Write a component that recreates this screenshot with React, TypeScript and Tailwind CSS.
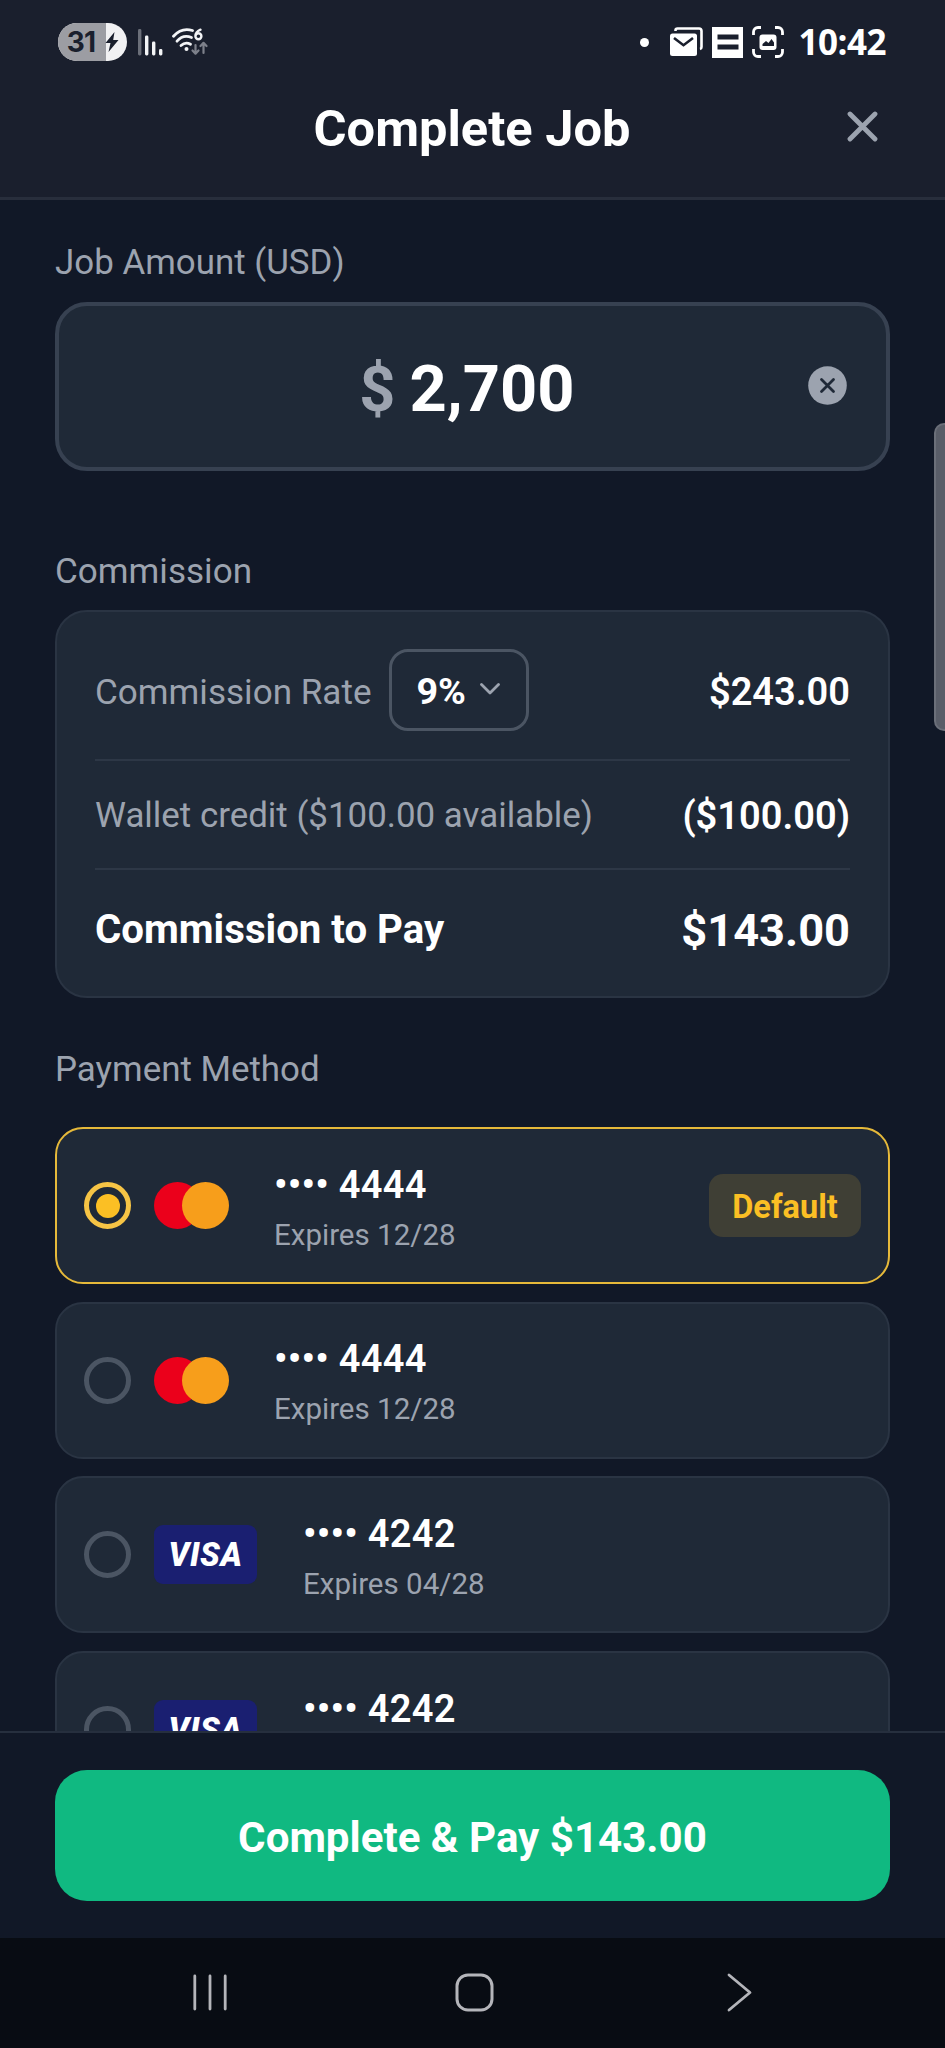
import React from 'react';

type Brand = 'mastercard' | 'visa';

interface SavedCard {
  id: string;
  brand: Brand;
  last4: string;
  expires: string;
  isDefault?: boolean;
}

const cards: SavedCard[] = [
  { id: 'card-1', brand: 'mastercard', last4: '4444', expires: '12/28', isDefault: true },
  { id: 'card-2', brand: 'mastercard', last4: '4444', expires: '12/28' },
  { id: 'card-3', brand: 'visa', last4: '4242', expires: '04/28' },
  { id: 'card-4', brand: 'visa', last4: '4242', expires: '04/28' },
];

const StatusBar: React.FC = () => (
  <div className="flex h-[84px] items-center justify-between pl-[58px] pr-[59px] font-['Open_Sans',sans-serif]">
    <div className="flex items-center">
      <div className="flex h-[38px] w-[69px] items-center overflow-hidden rounded-full bg-[#f1f1f3]">
        <div className="flex h-full w-[48px] items-center justify-end bg-[#9c9da3] pr-[11px] font-['Inter',sans-serif] text-[28px] font-bold tracking-[-1px] text-[#1a1f2d]">
          31
        </div>
        <svg className="-ml-px h-[20px] w-[14px]" viewBox="0 0 14 20" fill="#1a1f2d">
          <path d="M9.5 0 0.5 11h5L3.5 20 13.5 8H8.2z" />
        </svg>
      </div>
      <svg className="ml-[11px] h-[27px] w-[25px]" viewBox="0 0 25 27">
        <rect x="0" y="0" width="3.4" height="26.5" rx="1.4" fill="#6b6f79" />
        <rect x="7" y="6.5" width="3.4" height="20" rx="1.4" fill="#f3f4f6" />
        <rect x="14" y="12.5" width="3.4" height="14" rx="1.4" fill="#f3f4f6" />
        <rect x="21" y="20" width="3.4" height="6.5" rx="1.4" fill="#f3f4f6" />
      </svg>
      <svg className="ml-[9px] h-[28px] w-[36px]" viewBox="0 0 36 28" fill="none" strokeLinecap="round">
        <g stroke="#f3f4f6" strokeWidth="2.8">
          <path d="M1.5 8.2C7 2 14 0.5 20.5 2.5" />
          <path d="M5 13.2C9 8.5 14.5 7.5 19.5 9.5" />
          <path d="M9 17.6C12 14.8 15.5 14.6 18.5 16.3" />
        </g>
        <circle cx="14.5" cy="21" r="2" fill="#f3f4f6" />
        <path d="M28.5 1.7C24.5 3.5 23.4 6 23.4 8.3a3 3 0 1 0 3-3c-1.5 0-2.8 1.2-3 2.7" stroke="#f3f4f6" strokeWidth="2.4" />
        <g stroke="#7d808a" strokeWidth="2.2" strokeLinejoin="round">
          <path d="M23.5 17v8M20.5 22.5l3 3.2 3-3.2" />
          <path d="M31.5 25v-9M28.5 18l3-3.2 3 3.2" />
        </g>
      </svg>
    </div>
    <div className="flex items-center">
      <div className="size-[9px] rounded-full bg-white" />
      <svg className="ml-[21px] h-[30px] w-[33px]" viewBox="0 0 33 30">
        <path d="M5.5 4V3.5a2 2 0 0 1 2-2H29a2.5 2.5 0 0 1 2.5 2.5V20a2 2 0 0 1-1.5 2" fill="none" stroke="#fff" strokeWidth="2.6" />
        <rect x="0" y="6.5" width="27" height="22.5" rx="2.5" fill="#fff" />
        <path d="M4 11l9.5 7.2L23 11" fill="none" stroke="#1a1f2d" strokeWidth="2.6" />
      </svg>
      <svg className="ml-[9px] size-[31px]" viewBox="0 0 31 31">
        <rect width="31" height="31" fill="#fff" />
        <rect x="5.5" y="7.5" width="21" height="5" fill="#1a1f2d" />
        <rect x="5.5" y="17.5" width="21" height="5" fill="#1a1f2d" />
      </svg>
      <svg className="ml-[9px] size-[32px]" viewBox="0 0 32 32">
        <path
          d="M1.5 9V6a4.5 4.5 0 0 1 4.5-4.5h3M23 1.5h3A4.5 4.5 0 0 1 30.5 6v3M30.5 23v3a4.5 4.5 0 0 1-4.5 4.5h-3M9 30.5H6A4.5 4.5 0 0 1 1.5 26v-3"
          fill="none"
          stroke="#fff"
          strokeWidth="2.8"
        />
        <rect x="7.5" y="8.5" width="17" height="15.5" rx="3" fill="#fff" />
        <path d="M10.5 20v-2l3.5-3 2.5 2 3-4 2.5 3.5V20z" fill="#1a1f2d" />
      </svg>
      <span className="-mt-px ml-[14px] text-[35px] font-bold leading-none tracking-[-0.5px] text-white">10:42</span>
    </div>
  </div>
);

const Radio: React.FC<{ checked?: boolean }> = ({ checked }) => (
  <div
    className={
      checked
        ? 'flex size-[47px] shrink-0 items-center justify-center rounded-full border-[5px] border-[#f6c445]'
        : 'size-[47px] shrink-0 rounded-full border-[5px] border-[#4b5563]'
    }
  >
    {checked && <div className="size-[24px] rounded-full bg-[#fbbf24]" />}
  </div>
);

const BrandLogo: React.FC<{ brand: Brand }> = ({ brand }) =>
  brand === 'mastercard' ? (
    <svg className="h-[47px] w-[75px] shrink-0" viewBox="0 0 75 47">
      <circle cx="23.5" cy="23.5" r="23.5" fill="#eb001b" />
      <circle cx="51.5" cy="23.5" r="23.5" fill="#f79e1b" />
    </svg>
  ) : (
    <div className="mr-px flex h-[59px] w-[103px] shrink-0 items-center justify-center rounded-[9px] bg-[#1a1f71] pt-px text-[32.5px] font-black italic leading-none tracking-[0.6px] text-white">
      VISA
    </div>
  );

const PaymentCard: React.FC<{ card: SavedCard }> = ({ card }) => (
  <div
    className={
      card.isDefault
        ? 'flex h-[157px] shrink-0 items-center rounded-[28px] border-2 border-[#e6b93a] bg-[#1f2937] px-[27px]'
        : 'flex h-[157px] shrink-0 items-center rounded-[28px] border-2 border-[#2a3443] bg-[#1f2937] px-[27px]'
    }
  >
    <Radio checked={card.isDefault} />
    <div className="ml-[23px] mr-[45px]">
      <BrandLogo brand={card.brand} />
    </div>
    <div className="flex-1 pt-[4px]">
      <div className="text-[38px] font-semibold leading-[44px] tracking-[0.3px] text-white">•••• {card.last4}</div>
      <div className="mt-[10px] text-[29.5px] leading-[36px] text-[#9ca3af]">Expires {card.expires}</div>
    </div>
    {card.isDefault && (
      <span className="flex h-[63px] w-[152px] items-center justify-center rounded-[14px] bg-[#3f3f35] pt-[3px] text-[32.5px] font-bold text-[#fbbf24]">
        Default
      </span>
    )}
  </div>
);

export default function App() {
  return (
    <div className="relative flex h-[2048px] w-[945px] flex-col overflow-hidden bg-[#111827] font-['Roboto',sans-serif]">
      <header className="h-[200px] shrink-0 border-b-[3px] border-[#282e3c] bg-[#1a1f2d]">
        <StatusBar />
        <div className="grid h-[88px] grid-cols-[1fr_auto_1fr] items-center pr-[67px]">
          <span />
          <h1 className="translate-x-[33px] pt-[2px] text-[50.6px] font-bold leading-none text-white">Complete Job</h1>
          <button className="justify-self-end pb-[4px]" aria-label="Close">
            <svg className="size-[31px]" viewBox="0 0 31 31" fill="none" stroke="#9ca3af" strokeWidth="4.8" strokeLinecap="round">
              <path d="M3 3l25 25M28 3L3 28" />
            </svg>
          </button>
        </div>
      </header>

      <main className="flex h-[1531px] shrink-0 flex-col overflow-hidden px-[55px] pt-[42px]">
        <div className="h-[60px] shrink-0 text-[34.9px] leading-[42px] text-[#9ca3af]">Job Amount (USD)</div>
        <div className="grid h-[169px] shrink-0 grid-cols-[1fr_auto_1fr] items-center rounded-[32px] border-4 border-[#374151] bg-[#1f2937] pr-[39px]">
          <span />
          <div className="flex translate-x-[14px] items-center gap-[14px] pt-[5px] text-[65px] font-bold leading-none">
            <span className="text-[63px] text-[#9ca3af]">$</span>
            <span className="text-white">2,700</span>
          </div>
          <svg className="-mt-[2px] size-[39px] justify-self-end" viewBox="0 0 39 39">
            <circle cx="19.5" cy="19.5" r="19.3" fill="#9ca3af" />
            <path d="M13.5 13.5l12 12M25.5 13.5l-12 12" stroke="#1f2937" strokeWidth="2.8" strokeLinecap="round" />
          </svg>
        </div>

        <div className="mt-[79px] h-[60px] shrink-0 text-[35.1px] leading-[42px] text-[#9ca3af]">Commission</div>
        <div className="h-[388px] shrink-0 rounded-[32px] border-2 border-[#2a3443] bg-[#1f2937] px-[38px]">
          <div className="flex h-[149px] items-center justify-between border-b-2 border-[#2d3746] pt-[9px]">
            <div className="flex items-center">
              <span className="pt-[4px] text-[35.1px] text-[#9ca3af]">Commission Rate</span>
              <button className="ml-[18px] flex h-[82px] w-[140px] items-center rounded-[19px] border-[3px] border-[#4b5563] pl-[24px]">
                <span className="pt-[2px] text-[37.7px] font-bold text-white">9%</span>
                <svg className="ml-[14px] mb-[2px] h-[12px] w-[20px]" viewBox="0 0 20 12" fill="none" stroke="#9ca3af" strokeWidth="2.8" strokeLinecap="round" strokeLinejoin="round">
                  <path d="M1.5 1.5L10 10l8.5-8.5" />
                </svg>
              </button>
            </div>
            <span className="pt-[5px] text-[38px] font-semibold text-white">$243.00</span>
          </div>
          <div className="flex h-[109px] items-center justify-between border-b-2 border-[#2d3746] pt-[4px]">
            <span className="text-[34.9px] text-[#9ca3af]">Wallet credit ($100.00 available)</span>
            <span className="text-[38px] font-semibold text-white">($100.00)</span>
          </div>
          <div className="flex h-[121px] items-center justify-between">
            <span className="text-[40.2px] font-bold text-white">Commission to Pay</span>
            <span className="text-[45.2px] font-bold text-white">$143.00</span>
          </div>
        </div>

        <div className="mt-[51px] h-[78px] shrink-0 text-[34.9px] leading-[42px] text-[#9ca3af]">Payment Method</div>
        <div className="flex flex-col gap-[17.7px]">
          {cards.map(card => (
            <PaymentCard key={card.id} card={card} />
          ))}
        </div>
      </main>

      <footer className="h-[207px] shrink-0 border-t-2 border-[#262f3e] px-[55px] pt-[37px]">
        <button className="flex h-[131px] w-full items-center justify-center rounded-[32px] bg-[#10b981] pt-[4px] text-[42.1px] font-bold text-white">
          Complete &amp; Pay $143.00
        </button>
      </footer>

      <nav className="flex h-[110px] shrink-0 items-start bg-[#080c13] pl-[193px] pt-[35px]">
        <svg className="h-[38px] w-[34px]" viewBox="0 0 34 38" stroke="#b4b5ba" strokeWidth="2.8" strokeLinecap="round">
          <path d="M1.8 3v33M17 3v33M32.2 3v33" />
        </svg>
        <svg className="ml-[228px] size-[39px]" viewBox="0 0 39 39" fill="none" stroke="#b4b5ba" strokeWidth="3">
          <rect x="2" y="2" width="35" height="35" rx="11" />
        </svg>
        <svg className="ml-[233px] h-[39px] w-[25px]" viewBox="0 0 25 39" fill="none" stroke="#b4b5ba" strokeWidth="2.8" strokeLinecap="round" strokeLinejoin="round">
          <path d="M2 2l21 17.5L2 37" />
        </svg>
      </nav>

      <div className="absolute right-0 top-[423px] h-[308px] w-[11px] rounded-l-[10px] border-2 border-r-0 border-[#6b6f79] bg-[#595d68]" />
    </div>
  );
}
